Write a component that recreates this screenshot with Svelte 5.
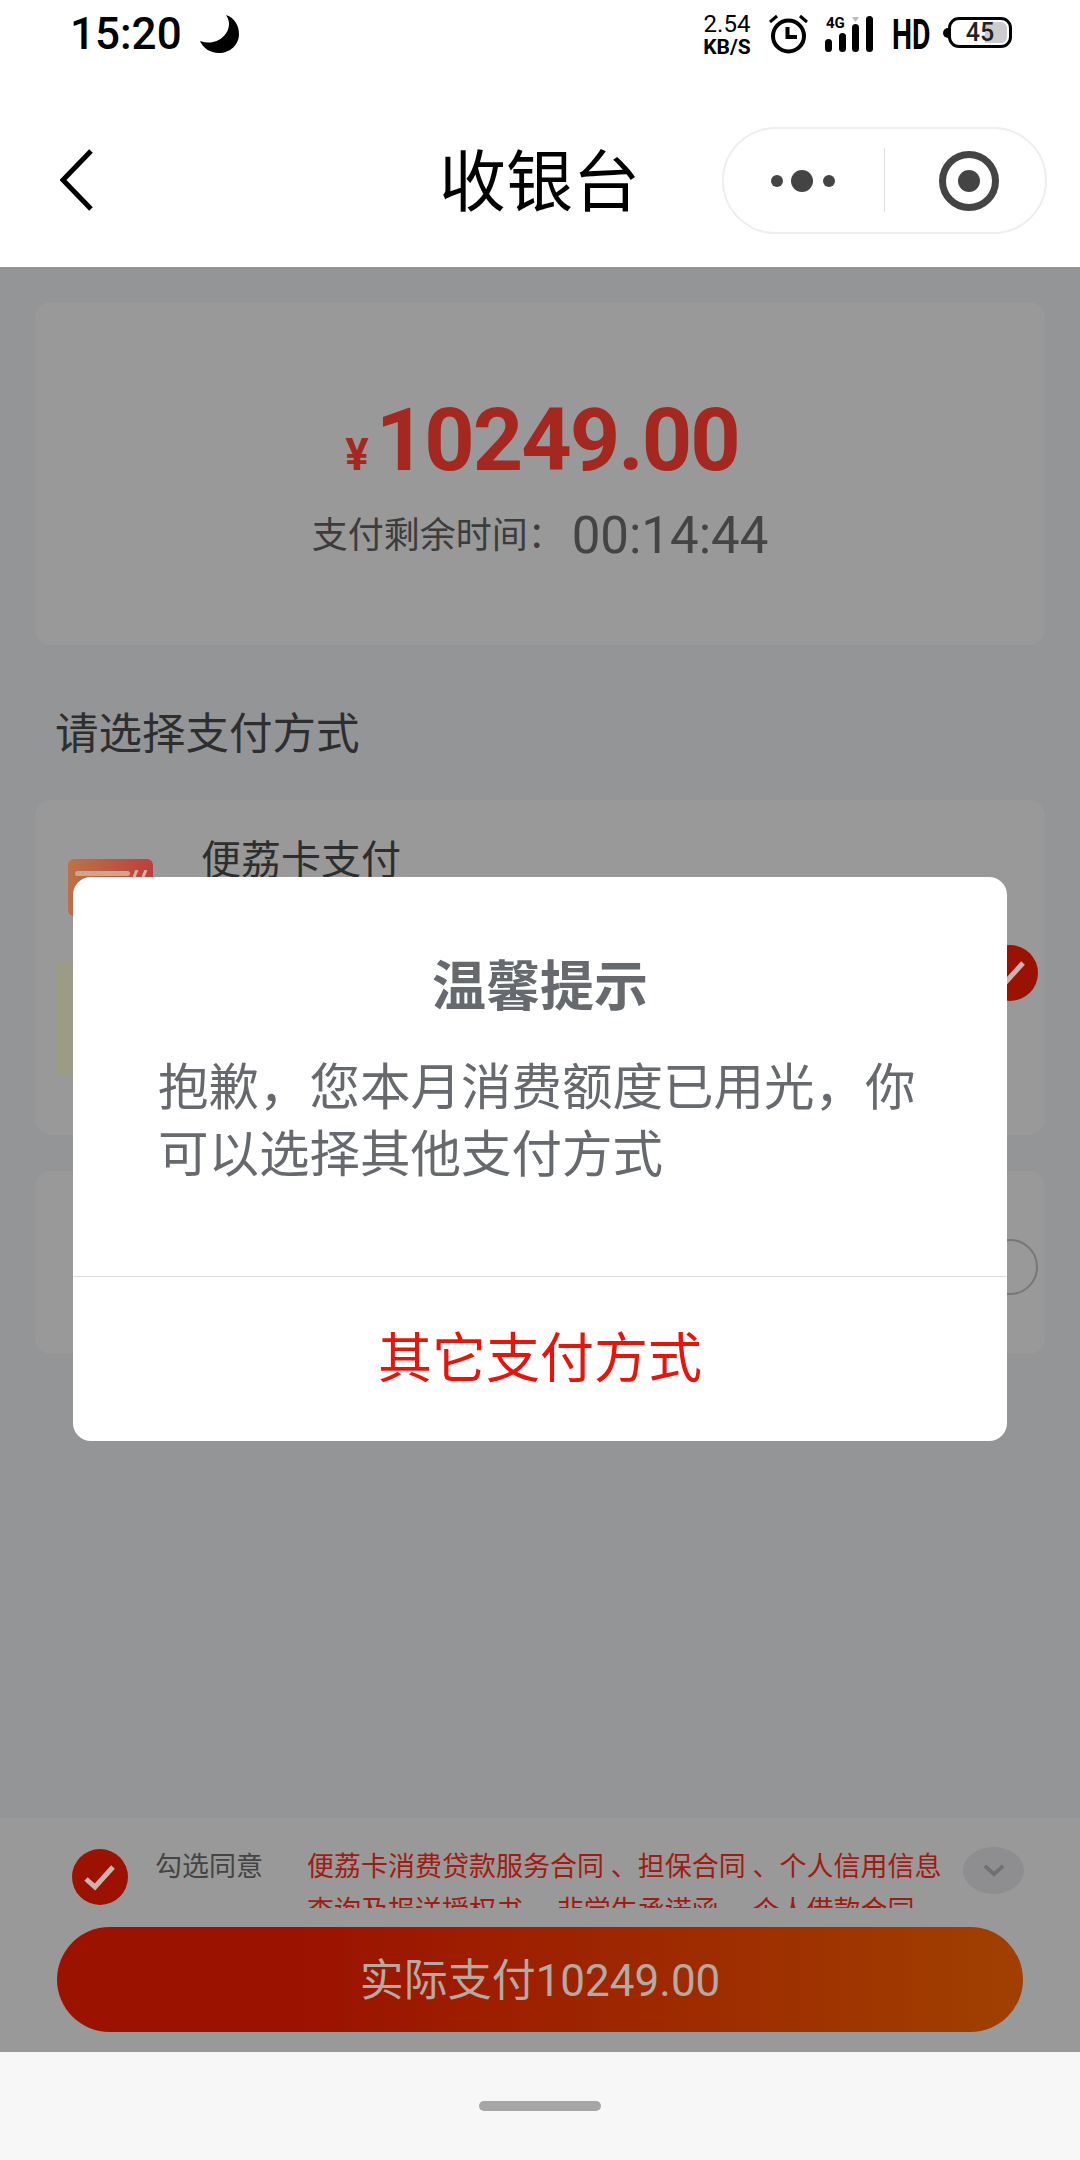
<script>
  const dots = [
    { cx: 778, r: 6 },
    { cx: 803, r: 11 },
    { cx: 830, r: 6 }
  ];
</script>

<div class="page">
  <header class="status">
    <div class="status-left">
      <span class="clock">15:20</span>
      <svg class="moon" viewBox="0 0 39 38" width="39" height="38"><path d="M26 0C35 3 39 11 39 19C39 30 30 38 19 38C10 38 3 33 0 26C3 27 6 27.5 9 27.5C20 27.5 29 18.5 29 9C29 6 28 3 26 0Z" fill="#000" /></svg>
    </div>
    <div class="status-right">
      <div class="speed"><span class="speed-num">2.54</span><span class="speed-unit">KB/S</span></div>
      <svg class="alarm" viewBox="0 0 39 40" width="39" height="40">
        <circle cx="19.5" cy="22" r="15.5" fill="none" stroke="#000" stroke-width="4" />
        <path d="M18.5 13V23H28" fill="none" stroke="#000" stroke-width="4" />
        <path d="M1 8L8 2M38 8L31 2" fill="none" stroke="#000" stroke-width="3" />
      </svg>
      <div class="signal">
        <span class="net">4G</span>
        <svg viewBox="0 0 48 38" width="48" height="38">
          <rect x="0" y="23" width="7" height="13" rx="3.5" />
          <rect x="14" y="17" width="7" height="19" rx="3.5" />
          <rect x="27" y="8" width="7" height="28" rx="3.5" />
          <rect x="41" y="0" width="7" height="36" rx="3.5" />
          <path d="M27 1H34L30.5 6Z" fill="#bbb" />
        </svg>
      </div>
      <span class="hd">HD</span>
      <div class="battery">
        <span class="tip"></span>
        <div class="shell"><span class="fill"></span><span class="level">45</span></div>
      </div>
    </div>
  </header>

  <nav class="nav">
    <svg class="back" viewBox="0 0 34 62" width="34" height="62"><path d="M31 2L3 31L31 60" fill="none" stroke="#000" stroke-width="5" /></svg>
    <h1>收银台</h1>
    <div class="capsule">
      <svg viewBox="760 160 90 44" width="90" height="44" class="more">
        {#each dots as d}<circle cx={d.cx} cy="182" r={d.r} fill="#444" />{/each}
      </svg>
      <span class="split"></span>
      <svg viewBox="0 0 60 60" width="60" height="60" class="target">
        <circle cx="30" cy="30" r="26.5" fill="none" stroke="#444" stroke-width="7" />
        <circle cx="30" cy="30" r="11" fill="#444" />
      </svg>
    </div>
  </nav>

  <main class="main">
    <section class="card amount-card">
      <div class="amount"><span class="yen">¥</span><span class="value">10249.00</span></div>
      <div class="remain"><span class="remain-label">支付剩余时间&#xFF1A;</span><span class="time">00:14:44</span></div>
    </section>

    <h2>请选择支付方式</h2>

    <section class="card method selected">
      <div class="method-body">
        <div class="method-head">
          <div class="card-icon">
            <span class="stripe"></span>
            <svg class="slashes" viewBox="0 0 18 7" width="18" height="7"><path d="M3 7L6 0M12 7L15 0" fill="none" stroke="#d8b0a0" stroke-width="3" /></svg>
          </div>
          <span class="method-name">便荔卡支付</span>
        </div>
        <div class="promo"></div>
      </div>
      <svg class="tick" viewBox="0 0 56 56" width="56" height="56">
        <circle cx="28" cy="28" r="28" fill="#9c1200" />
        <path d="M14 30L23 38L41 18" fill="none" stroke="#c9b5ad" stroke-width="5" />
      </svg>
    </section>

    <section class="card method other">
      <span class="radio"></span>
    </section>
  </main>

  <footer class="footer">
    <div class="agree">
      <svg class="tick" viewBox="0 0 56 56" width="56" height="56">
        <circle cx="28" cy="28" r="28" fill="#9c1200" />
        <path d="M14 30L23 38L41 18" fill="none" stroke="#c9b5ad" stroke-width="5" />
      </svg>
      <span class="agree-label">勾选同意</span>
      <div class="contracts">便荔卡消费贷款服务合同 、担保合同 、个人信用信息查询及报送授权书 、非学生承诺函 、个人借款合同</div>
      <div class="expand">
        <svg viewBox="0 0 24 14" width="22" height="13"><path d="M2 2L12 11L22 2" fill="none" stroke="#6f7073" stroke-width="4" /></svg>
      </div>
    </div>
    <button class="pay">实际支付10249.00</button>
  </footer>

  <div class="home"><span class="pill"></span></div>

  <div class="modal">
    <h3>温馨提示</h3>
    <p>抱歉&#xFF0C;您本月消费额度已用光&#xFF0C;你可以选择其他支付方式</p>
    <div class="modal-action">其它支付方式</div>
  </div>
</div>

<style>
  :global(body) {
    margin: 0;
    background: #f7f7f7;
  }
  .page {
    position: relative;
    width: 1080px;
    height: 2160px;
    display: flex;
    flex-direction: column;
    overflow: hidden;
    font-family: Roboto, "Noto Sans CJK SC", sans-serif;
    background: #949597;
  }
  .status {
    height: 70px;
    flex: none;
    background: #fff;
    display: flex;
    justify-content: space-between;
    align-items: flex-start;
    padding: 0 68px 0 70px;
    box-sizing: border-box;
    color: #000;
  }
  .status-left {
    display: flex;
    align-items: flex-start;
  }
  .clock {
    font-size: 44px;
    line-height: 50px;
    font-weight: 500;
    margin-top: 9px;
    letter-spacing: 0;
  }
  .moon {
    margin: 15px 0 0 18px;
  }
  .status-right {
    display: flex;
    align-items: flex-start;
  }
  .speed {
    display: flex;
    flex-direction: column;
    align-items: center;
    width: 48px;
    margin-top: 12px;
  }
  .speed-num {
    font-size: 24px;
    line-height: 25px;
    font-weight: 400;
  }
  .speed-unit {
    font-size: 21px;
    line-height: 20px;
    font-weight: 700;
  }
  .alarm {
    margin: 14px 0 0 18px;
  }
  .signal {
    position: relative;
    margin: 16px 0 0 17px;
  }
  .net {
    position: absolute;
    left: 1px;
    top: -2px;
    font-size: 15px;
    line-height: 18px;
    font-weight: 700;
  }
  .hd {
    width: 38px;
    margin: 9px 0 0 19px;
    font-size: 43px;
    line-height: 50px;
    font-weight: 700;
    transform: scaleX(0.66);
    transform-origin: left center;
    white-space: nowrap;
  }
  .battery {
    display: flex;
    align-items: center;
    margin: 17px 0 0 13px;
  }
  .tip {
    width: 5px;
    height: 10px;
    background: #000;
    border-radius: 5px 0 0 5px;
  }
  .shell {
    position: relative;
    width: 64px;
    height: 31px;
    box-sizing: border-box;
    border: 3.5px solid #000;
    border-radius: 11px;
    display: flex;
    align-items: center;
    justify-content: center;
    overflow: hidden;
  }
  .fill {
    position: absolute;
    right: 2px;
    top: 2px;
    bottom: 2px;
    width: 22px;
    background: #ccc;
    border-radius: 0 6px 6px 0;
  }
  .level {
    position: relative;
    font-size: 25px;
    line-height: 24px;
    font-weight: 500;
    color: #222;
  }
  .nav {
    height: 197px;
    flex: none;
    background: #fff;
    display: grid;
    grid-template-columns: 1fr auto 1fr;
    align-items: center;
    padding: 0 33px 0 60px;
    box-sizing: border-box;
  }
  .back {
    margin-top: 23px;
  }
  h1 {
    margin: 0 28px 0 0;
    padding-top: 28px;
    font-size: 67px;
    line-height: 90px;
    font-weight: 400;
    color: #000;
  }
  .capsule {
    justify-self: end;
    margin-top: 23px;
    width: 325px;
    height: 107px;
    box-sizing: border-box;
    border: 2px solid #eee;
    border-radius: 54px;
    display: flex;
    align-items: center;
    position: relative;
  }
  .more {
    margin: 1px 0 0 35px;
  }
  .split {
    width: 1px;
    height: 64px;
    background: #ddd;
    margin-left: 35px;
  }
  .target {
    margin: 1px 0 0 54px;
  }
  .main {
    flex: 1;
    min-height: 0;
    padding: 35px 35px 0;
    box-sizing: border-box;
  }
  .card {
    background: #999;
    border-radius: 16px;
  }
  .amount-card {
    height: 343px;
    padding-top: 93px;
    box-sizing: border-box;
    display: flex;
    flex-direction: column;
    align-items: center;
  }
  .amount {
    display: flex;
    align-items: baseline;
    color: #a52820;
    font-weight: 700;
    margin-left: 4px;
  }
  .yen {
    font-size: 44px;
    line-height: 90px;
    margin-right: 7px;
  }
  .value {
    font-size: 88px;
    line-height: 90px;
    letter-spacing: -2px;
  }
  .remain {
    display: flex;
    align-items: center;
    margin-top: 6px;
    color: #3c3c3c;
  }
  .remain-label {
    font-size: 36px;
    line-height: 60px;
    margin-right: 8px;
    white-space: nowrap;
  }
  .time {
    font-size: 51px;
    line-height: 60px;
    color: #444;
  }
  h2 {
    margin: 60px 0 0 20px;
    font-size: 43.5px;
    line-height: 60px;
    font-weight: 400;
    color: #2e2e2e;
  }
  .method {
    display: flex;
    justify-content: space-between;
    align-items: center;
    padding-right: 7px;
    box-sizing: border-box;
  }
  .selected {
    height: 335px;
    margin-top: 35px;
  }
  .selected .tick {
    margin-top: 10px;
  }
  .method-body {
    align-self: flex-start;
    padding: 34px 0 0 33px;
  }
  .method-head {
    display: flex;
    align-items: flex-start;
  }
  .card-icon {
    width: 85px;
    height: 57px;
    margin-top: 25px;
    border-radius: 6px;
    background: linear-gradient(100deg, #bd7348, #bc3a3a);
    position: relative;
  }
  .stripe {
    position: absolute;
    left: 7px;
    right: 23px;
    top: 12px;
    height: 5px;
    border-radius: 3px;
    background: #cfa590;
  }
  .slashes {
    position: absolute;
    right: 4px;
    top: 11px;
  }
  .method-name {
    margin-left: 48px;
    font-size: 40px;
    line-height: 54px;
    color: #2e2e2e;
  }
  .promo {
    width: 40px;
    height: 113px;
    margin: 46px 0 0 -13px;
    background: #9c9b86;
    border-radius: 4px;
  }
  .other {
    height: 183px;
    margin-top: 36px;
    justify-content: flex-end;
    padding-top: 8px;
  }
  .radio {
    width: 56px;
    height: 56px;
    box-sizing: border-box;
    border: 2px solid #777;
    border-radius: 50%;
  }
  .footer {
    height: 234px;
    flex: none;
    background: #999;
    padding: 27px 57px 0 72px;
    box-sizing: border-box;
  }
  .agree {
    display: flex;
    align-items: flex-start;
    height: 63px;
  }
  .agree .tick {
    flex: none;
    margin-top: 4px;
  }
  .agree-label {
    flex: none;
    width: 108px;
    margin: 0 44px 0 27px;
    font-size: 27px;
    line-height: 44px;
    color: #444;
  }
  .contracts {
    width: 640px;
    height: 63px;
    overflow: hidden;
    font-size: 27px;
    line-height: 44px;
    color: #a01c12;
    flex: none;
  }
  .expand {
    flex: none;
    margin: 2px 0 0 16px;
    width: 61px;
    height: 47px;
    border-radius: 50%;
    background: #8e8e90;
    display: flex;
    align-items: center;
    justify-content: center;
  }
  .pay {
    display: block;
    width: 966px;
    height: 105px;
    margin: 19px 0 0 -15px;
    padding: 0 0 6px;
    border: 0;
    border-radius: 53px;
    background: linear-gradient(90deg, #9c1200 0%, #9c1200 25%, #a04000 100%);
    font-family: inherit;
    font-size: 44px;
    font-weight: 400;
    color: #b3aaa4;
  }
  .home {
    height: 108px;
    flex: none;
    background: #f7f7f7;
    display: flex;
    justify-content: center;
    padding-top: 49px;
    box-sizing: border-box;
  }
  .pill {
    width: 122px;
    height: 10px;
    border-radius: 5px;
    background: #a6a6a6;
  }
  .modal {
    position: absolute;
    left: 73px;
    top: 877px;
    width: 934px;
    height: 564px;
    background: #fff;
    border-radius: 18px;
    box-sizing: border-box;
    display: flex;
    flex-direction: column;
    color: #666a6e;
  }
  h3 {
    margin: 73px 0 0;
    text-align: center;
    font-size: 54px;
    line-height: 76px;
    font-weight: 700;
  }
  p {
    margin: 28px 0 0;
    padding: 0 85px;
    font-size: 50.5px;
    line-height: 67px;
    height: 134px;
  }
  .modal-action {
    margin-top: auto;
    height: 165px;
    border-top: 1px solid #ddd;
    box-sizing: border-box;
    padding-bottom: 10px;
    display: flex;
    align-items: center;
    justify-content: center;
    font-size: 54px;
    color: #e6140a;
  }
</style>
